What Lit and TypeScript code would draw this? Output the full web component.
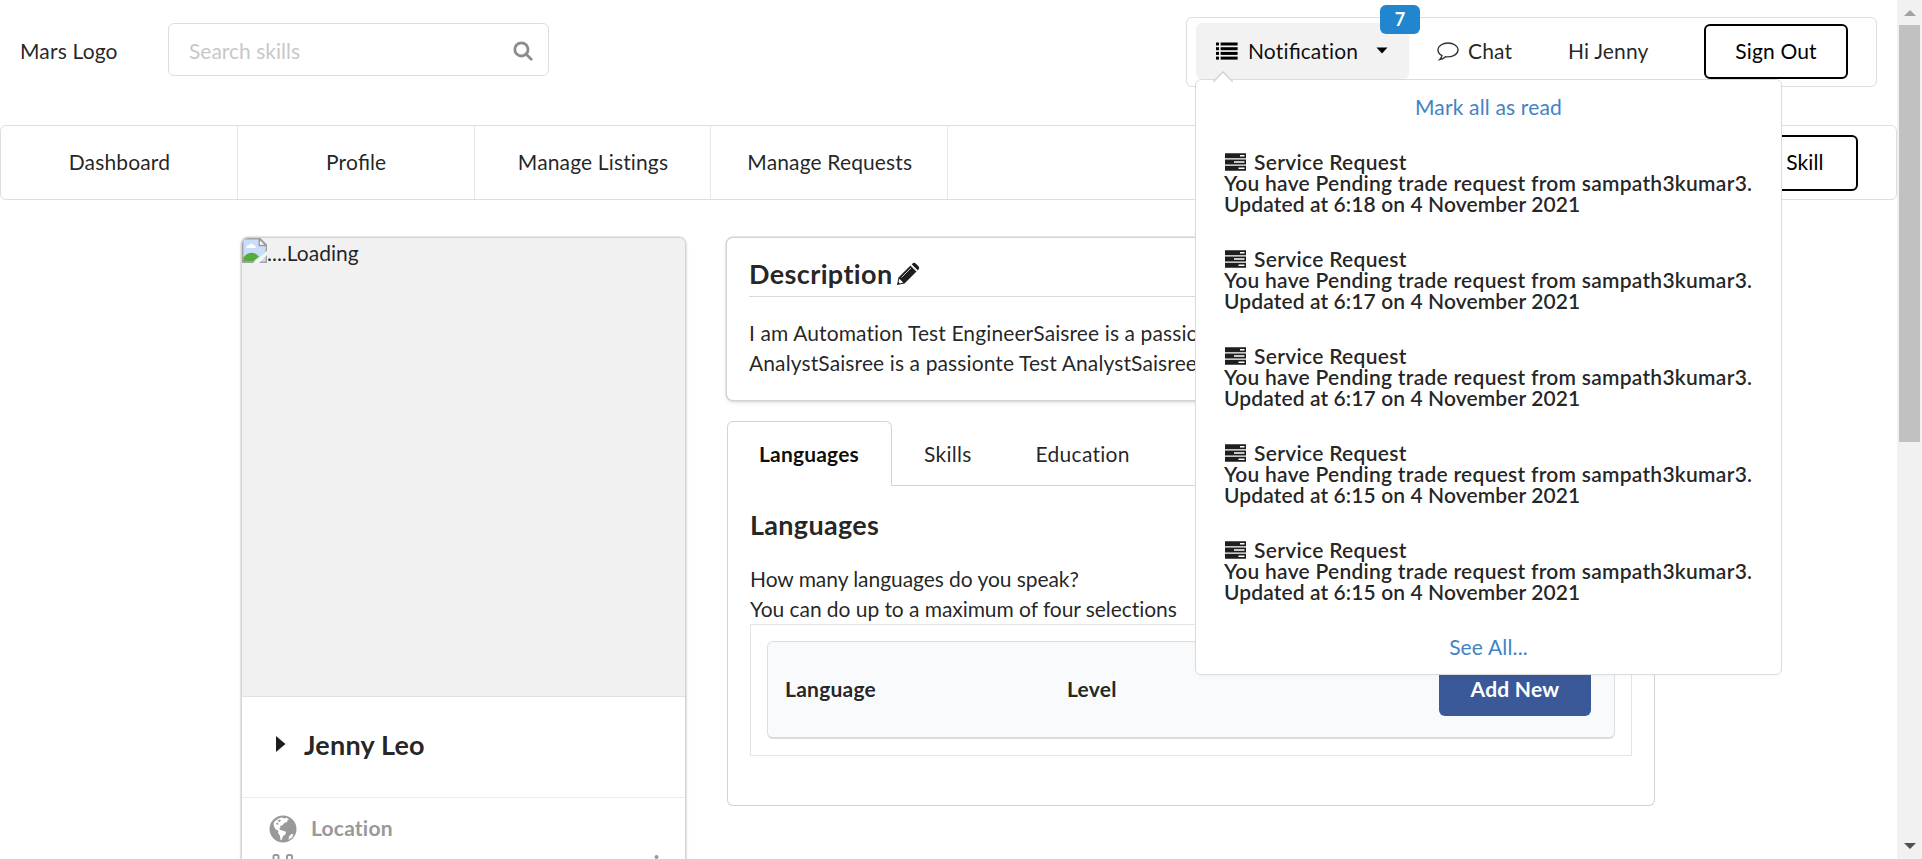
import { LitElement, html, css, svg } from "lit";
import { customElement } from "lit/decorators.js";

const NOTES = ["6:18", "6:17", "6:17", "6:15", "6:15"];

const fi = html`<span class="fi">fi</span>`;

const listIcon = html`<svg class="ic" width="22" height="18" viewBox="0 0 22 18" fill="#000">
  ${[0.5, 5.2, 9.9, 14.6].map((y) => svg`<rect x="0" y=${y} width="3" height="3"/><rect x="4.6" y=${y} width="17" height="3"/>`)}
</svg>`;

const serverIcon = html`<svg class="server" width="22" height="18" viewBox="0 0 22 18">
  <path fill="#1e1e1e" d="M1 0.300h21v5H1zM1 6.500h21v5H1zM1 12.700h21v5H1z"/>
  <path fill="#fff" d="M16 2h4.500v1.500H16zM10 8.200h10.500v1.500H10zM14.500 14.400h6v1.500h-6z"/>
</svg>`;

@customElement("app-root")
export class AppRoot extends LitElement {
  static styles = css`
    :host { display: block; width: 100%; height: 859px; overflow: hidden; font: 21px/30px Lato, "Liberation Sans", sans-serif; font-variant-ligatures: none; color: rgba(0, 0, 0, 0.87); background: #fff; }
    * { box-sizing: border-box; }
    svg { display: block; flex: none; }
    .fi { font-variant-ligatures: normal; letter-spacing: 0; }
    .window { display: flex; height: 859px; }
    .page { flex: none; width: 1897px; height: 859px; overflow: hidden; }
    .header { display: flex; align-items: flex-start; height: 125px; padding: 17px 20px 0 20px; letter-spacing: 0.16px; }
    .logo { width: 148px; padding-top: 19px; }
    .search { display: flex; align-items: center; justify-content: space-between; width: 381px; height: 53px; margin-top: 6px; padding: 2px 15px 0 20px; border: 1.5px solid #dedede; border-radius: 6px; color: #c8c8c8; letter-spacing: 0; }
    .account { position: relative; display: flex; align-items: center; margin-left: auto; width: 691px; height: 70px; padding: 0 0 0 9px; border: 1.5px solid #dedede; border-radius: 6px; }
    .notif { position: relative; display: flex; align-items: center; width: 213px; height: 56px; margin-top: -2px; padding: 0 0 1px 20px; background: #f2f2f2; border-radius: 6px; color: rgba(0,0,0,.95); }
    .notif .ic { margin-right: 10px; }
    .caret { margin-left: 18px; }
    .badge { position: absolute; left: 184px; top: -18px; width: 40px; height: 29px; border-radius: 6px; background: #2185d0; color: #fff; font-size: 18px; line-height: 29px; font-weight: 700; text-align: center; }
    .chat { display: flex; align-items: center; gap: 9px; margin: -2px 0 0 28px; width: 131px; }
    .hi { width: 136px; margin-top: -2px; }
    .btn { flex: none; display: flex; align-items: center; justify-content: center; height: 56px; border: 2px solid #000; border-radius: 6px; color: #000; background: #fff; padding-bottom: 1px; }
    .signout { width: 144px; height: 55px; margin-top: -2px; padding-bottom: 0; }
    .popup { position: absolute; z-index: 5; left: 8px; top: 61px; width: 587px; height: 596px; padding-top: 12px; border: 1.5px solid #dadbdc; border-radius: 6px; background: #fff; box-shadow: 0 3px 5px rgba(34,36,38,.02); }
    .tip { position: absolute; left: 17px; top: -9px; }
    .link { color: #4183c4; text-align: center; }
    .notes { display: grid; gap: 33.4px; padding: 29px 0 29px 28px; font-weight: 600; line-height: 21.2px; letter-spacing: 0.1px; white-space: nowrap; }
    .title { display: flex; align-items: center; gap: 8px; height: 21.2px; letter-spacing: 0.3px; }
    .body { letter-spacing: 0.26px; }
    .nav { display: flex; align-items: center; height: 75px; border: 1.5px solid #dedede; border-radius: 6px; letter-spacing: 0.14px; }
    .cell { display: flex; align-items: center; justify-content: center; width: 236.8px; height: 73px; padding: 0 0 1px 1px; border-right: 1.5px solid #e8e8e8; }
    .share { margin: 0 38px 0 auto; width: 164px; }
    .main { display: flex; align-items: flex-start; gap: 42px; padding: 38px 0 0 242px; }
    .card { border-radius: 6px; box-shadow: 0 0 0 1.5px #d4d4d5, 0 1.5px 4.5px #d4d4d5; background: #fff; }
    .profile { width: 443px; height: 700px; overflow: hidden; }
    .photo { display: flex; align-items: flex-start; height: 459px; background: #f1f1f1; border-bottom: 1px solid #e2e2e2; }
    .name { display: flex; align-items: center; height: 101px; padding: 0 0 4px 34px; border-bottom: 1.5px solid #ececec; font-size: 27px; font-weight: 700; gap: 18px; letter-spacing: 0.2px; }
    .name svg { margin-bottom: 3px; }
    .loc { display: flex; align-items: center; gap: 14px; padding: 17px 0 0 27px; color: #999; font-weight: 700; letter-spacing: 0.2px; }
    .loc span { margin-top: -2px; }
    .more { display: flex; justify-content: space-between; padding: 11px 26px 0 30px; }
    .col { width: 928px; }
    .desc { height: 162px; padding: 22px 22px 0; }
    .head { display: flex; align-items: center; gap: 3px; font-size: 27px; font-weight: 700; height: 37px; padding-bottom: 8px; border-bottom: 1.5px solid #d9dadb; letter-spacing: 0.38px; }
    .text { margin: 21px 0 0; white-space: nowrap; overflow: hidden; letter-spacing: 0.11px; }
    .tabs { display: flex; margin-top: 21px; height: 65px; }
    .tab { display: flex; align-items: center; padding: 2px 32px 0; border-bottom: 1.5px solid #d4d4d5; letter-spacing: 0.28px; }
    .tab.on { width: 165px; border: 1.5px solid #d4d4d5; border-bottom: 0; border-radius: 6px 6px 0 0; font-weight: 700; color: rgba(0,0,0,.95); letter-spacing: 0.18px; padding: 0 0 0 31px; }
    .rest { flex: 1; border-bottom: 1.5px solid #d4d4d5; }
    .pane { height: 320px; padding: 22px 22px 0; border: 1.5px solid #d4d4d5; border-top: 0; border-radius: 0 0 6px 6px; letter-spacing: -0.06px; }
    .h { font-size: 27px; font-weight: 700; line-height: 34px; margin-bottom: 22px; letter-spacing: 0.3px; }
    .frame { height: 132px; border: 1.5px solid #e3e4e4; padding: 16px; letter-spacing: 0.24px; }
    .table { display: flex; align-items: center; height: 98px; padding: 0 23px 1px 17px; background: #f9fafb; border: 1.5px solid #dddedf; border-bottom: 2px solid #d8dadb; border-radius: 6px; font-weight: 700; }
    .c1 { width: 282px; }
    .add { margin-left: auto; width: 152px; height: 54px; border-radius: 6px; background: #3b5998; color: #fff; line-height: 54px; text-align: center; }
    .bar { flex: 1; display: flex; flex-direction: column; align-items: center; height: 859px; background: #f1f1f1; padding: 10px 0; }
    .thumb { width: 21px; height: 417px; margin-top: 9px; background: #c1c1c1; }
    .down { margin-top: auto; }
  `;

  render() {
    return html`<div class="window">
      <div class="page">
        <div class="header">
          <div class="logo">Mars Logo</div>
          <div class="search"><span>Search skills</span>
            <svg width="20" height="20" viewBox="0 0 20 20" fill="none" stroke="#8c8c8c" stroke-width="2.8"><circle cx="8.4" cy="8.4" r="6.6"/><path d="M13 13l5.2 5.2" stroke-linecap="round"/></svg>
          </div>
          <div class="account">
            <div class="notif">${listIcon}<span>Noti${fi}cation</span>
              <svg class="caret" width="12" height="7" viewBox="0 0 12 7"><path d="M0.500 0.500h11L6 6.500z"/></svg>
              <div class="badge">7</div>
            </div>
            <div class="chat">
              <svg width="22" height="20" viewBox="0 0 22 20" fill="none" stroke="#333" stroke-width="1.4"><path d="M11 2C5.600 2 1 5 1 9c0 2.400 1.500 4.400 4 5.700-.3 1.600-1 2.700-2.200 3.800 2.400-.4 4.200-1.300 5.700-2.800.8.200 1.600.200 2.500.200 5.500 0 10-3 10-6.900S16.500 2 11 2z"/></svg>
              <span>Chat</span>
            </div>
            <div class="hi">Hi Jenny</div>
            <div class="btn signout">Sign Out</div>
            <div class="popup">
              <svg class="tip" width="20" height="11" viewBox="0 0 20 11"><path d="M0 11L10 1L20 11" fill="#fff" stroke="#d4d4d5" stroke-width="1.5"/></svg>
              <div class="link">Mark all as read</div>
              <div class="notes">
                ${NOTES.map((t) => html`<div><div class="title">${serverIcon}<span>Service Request</span></div>
                  <div class="body">You have Pending trade request from sampath3kumar3.</div>
                  <div>Updated at ${t} on 4 November 2021</div></div>`)}
              </div>
              <div class="link">See All...</div>
            </div>
          </div>
        </div>
        <div class="nav">
          ${["Dashboard", html`<span>Pro${fi}le</span>`, "Manage Listings", "Manage Requests"].map((t) => html`<div class="cell">${t}</div>`)}
          <div class="btn share">Share Skill</div>
        </div>
        <div class="main">
          <div class="card profile">
            <div class="photo">
              <svg width="25" height="25" viewBox="0 0 25 25"><path d="M.7.7h17.600L24.300 6.700v17.600H.7z" fill="#c9dcf8" stroke="#a3a3a3" stroke-width="1.4"/><path d="M4.500 9.500c0-2 1.500-2.500 2.500-2 .8-2.500 4.500-2.500 5 0 2 0 2.300 2 1 2.500H5z" fill="#fff"/><path d="M1.400 23.600v-4C5 14.500 10 13.500 14 16l3 2.500-6 5.100z" fill="#57ab3c"/><path d="M11 25L25 13v4l-8 8z" fill="#f4f8f2"/><path d="M17.300 1v6.500H24z" fill="#fff" stroke="#999" stroke-width="1.300"/></svg>
              <span>....Loading</span>
            </div>
            <div class="name"><svg width="10" height="16" viewBox="0 0 10 16"><path d="M0 0l9.500 8L0 16z" fill="#1e1e1e"/></svg>Jenny Leo</div>
            <div class="loc">
              <svg width="28" height="28" viewBox="0 0 28 28"><circle cx="14" cy="14" r="13.500" fill="#999"/><path d="M5.500 6.500C8 4 10.500 2.600 13.500 2.400l1.500 1.200 2.500-.8 2.500 1.500-1.500 1-.5 2-2.500.5-2 2.500-2.500.8.500 1.700-1.500 1 2 1.500 2 .5 3 1-.5 2.500-2.500 2-1.500 4-1-.5-.5-4-2-2.500.5-2.500-3-1.500-1.500-3L4.500 9z" fill="#fff"/><path d="M8.500 5.500l2.500-1 1 1.500-2 1zM7 8.500l2-1 .500 1.500-1.500 1z" fill="#999"/><path d="M20 21.500l2.500-2.500 2 .5-1.500 2.800-3.500 2.700z" fill="#fff"/></svg>
              <span>Location</span>
            </div>
            <div class="more">
              <svg width="22" height="12" viewBox="0 0 22 12" fill="none" stroke="#999" stroke-width="2"><rect x="1.500" y="1" width="5" height="9" rx="1.500"/><rect x="15" y="1" width="5" height="9" rx="1.500"/></svg>
              <svg width="5" height="5" viewBox="0 0 5 5"><circle cx="2.500" cy="3" r="2" fill="#999"/></svg>
            </div>
          </div>
          <div class="col">
            <div class="card desc">
              <div class="head">Description
                <svg width="24" height="24" viewBox="0 0 24 24"><path d="M1 23l1.500-7.500L15 3l6 6L8.500 21.500z" fill="#1e1e1e"/><path d="M16.300 1.700C17.300.7 18.500.5 19.700 1.500l2.800 2.800c1 1.200.8 2.400-.2 3.400L21.700 8.300 15.700 2.300z" fill="#1e1e1e"/><path d="M14.600 3l6.400 6.400" stroke="#fff" stroke-width="1.100"/><path d="M5.500 15.500L15 6" stroke="#ccc" stroke-width="1" fill="none"/><path d="M3.400 16.800l3.800 3.800-3.200 1-1.500-1.500z" fill="#fff"/></svg>
              </div>
              <div class="text">I am Automation Test EngineerSaisree is a passionte<br>AnalystSaisree is a passionte Test AnalystSaisree</div>
            </div>
            <div class="tabs"><div class="tab on">Languages</div><div class="tab">Skills</div><div class="tab">Education</div><div class="rest"></div></div>
            <div class="pane">
              <div class="h">Languages</div>
              <div>How many languages do you speak?</div>
              <div>You can do up to a maximum of four selections</div>
              <div class="frame"><div class="table"><div class="c1">Language</div><div>Level</div><div class="add">Add New</div></div></div>
            </div>
          </div>
        </div>
      </div>
      <div class="bar">
        <svg width="12" height="6" viewBox="0 0 12 6"><path d="M0 6L6 0l6 6z" fill="#a3a3a3"/></svg>
        <div class="thumb"></div>
        <svg class="down" width="12" height="6" viewBox="0 0 12 6"><path d="M0 0h12L6 6z" fill="#505050"/></svg>
      </div>
    </div>`;
  }
}
